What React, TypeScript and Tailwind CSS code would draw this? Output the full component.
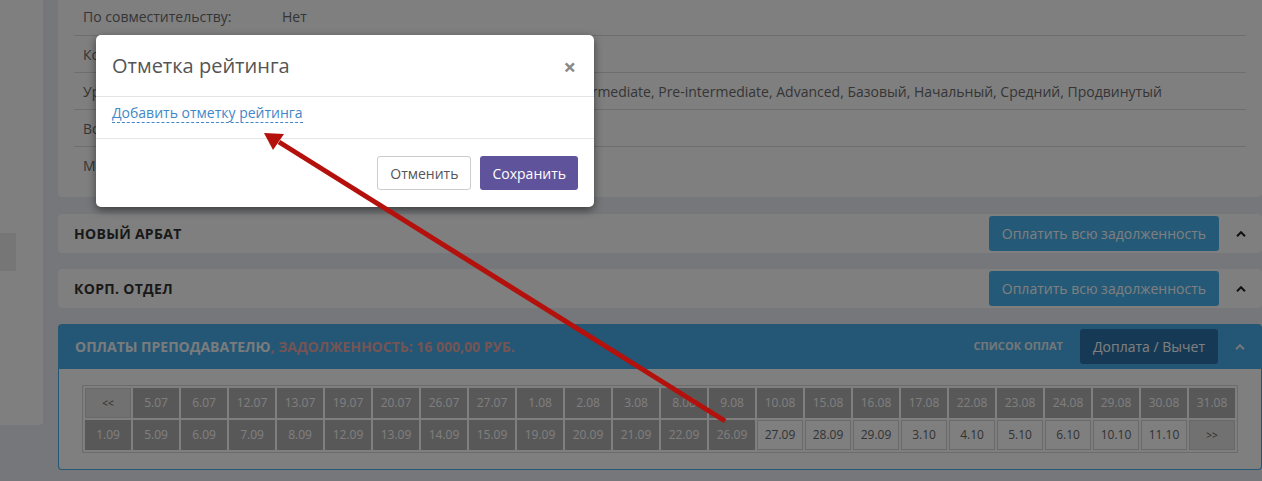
import React from 'react'

const row1 = ['<<', '5.07', '6.07', '12.07', '13.07', '19.07', '20.07', '26.07', '27.07', '1.08', '2.08', '3.08', '8.08', '9.08', '10.08', '15.08', '16.08', '17.08', '22.08', '23.08', '24.08', '29.08', '30.08', '31.08']
const row2 = ['1.09', '5.09', '6.09', '7.09', '8.09', '12.09', '13.09', '14.09', '15.09', '19.09', '20.09', '21.09', '22.09', '26.09', '27.09', '28.09', '29.09', '3.10', '4.10', '5.10', '6.10', '10.10', '11.10', '>>']

const infoRows = [
  { label: 'По совместительству:', value: 'Нет' },
  { label: 'Количество часов:', value: '' },
  { label: 'Уровни:', value: 'Beginner, Elementary, Upper-intermediate, Intermediate, Pre-intermediate, Advanced, Базовый, Начальный, Средний, Продвинутый' },
  { label: 'Возраст:', value: '' },
  { label: 'Метро:', value: '' },
]

const Chevron = ({ light }: { light?: boolean }) => (
  <svg width="10" height="6" viewBox="0 0 10 6" className={light ? 'text-[#e6edf3]' : 'text-[#222]'}>
    <polyline points="1,5.2 5,1.2 9,5.2" fill="none" stroke="currentColor" strokeWidth="2" />
  </svg>
)

// один серый/белый квадратик с датой
const DateCell = ({ text, idx }: { text: string; idx: number }) => {
  const nav = text === '<<' || text === '>>'
  const done = !nav && idx < 24 + 14
  let cls = 'bg-white border border-[#d4d4d4] text-[#666] text-[12px]'
  if (nav) cls = 'bg-[#e2e2e2] border border-[#d2d2d2] text-[#555] text-[10px]'
  else if (done) cls = 'bg-[#b0b0b0] border border-[#b0b0b0] text-white text-[12px]'
  return (
    <div className={`h-[30px] flex items-center justify-center ${cls}`}>
      {text}
    </div>
  )
}

const SectionCard = ({ title }: { title: string }) => (
  <div className="h-[39px] bg-white rounded-[4px] flex items-center justify-between pl-[16px]">
    <span className="text-[14px] font-bold text-[#333] uppercase tracking-[0.3px]">{title}</span>
    <div className="flex items-center">
      <button className="h-[35px] px-[13px] rounded-[3px] bg-[#49b2ee] text-white text-[14px]">
        Оплатить всю задолженность
      </button>
      <div className="w-[43px] flex justify-center">
        <Chevron />
      </div>
    </div>
  </div>
)

export default function App() {
  return (
    <div className="relative w-full h-[481px] overflow-hidden bg-[#eceef5] font-['Open_Sans',sans-serif]">
      <div className="flex">
        {/* sidebar */}
        <div className="w-[43px] h-[425px] bg-white rounded-br-[4px] pt-[233px] shrink-0">
          <div className="w-[16px] h-[38px] bg-[#ececec]" />
        </div>

        <div className="flex-1 ml-[15px]">
          {/* info card */}
          <div className="-mt-[2px] bg-white rounded-[4px] px-[16px] pb-[14px]">
            {infoRows.map((r, i) => (
              <div
                key={i}
                className={`h-[37px] flex items-center pl-[9px] text-[14px] text-[#6b6b6b] whitespace-nowrap ${i > 0 ? 'border-t border-[#dcdcdc]' : ''}`}
              >
                <span className="w-[199px] shrink-0">{r.label}</span>
                <span>{r.value}</span>
              </div>
            ))}
          </div>

          <div className="mt-[17px] flex flex-col gap-[16px]">
            <SectionCard title="Новый Арбат" />
            <SectionCard title="Корп. отдел" />

            {/* payments panel */}
            <div>
              <div className="h-[45px] bg-[#47aeea] rounded-t-[4px] flex items-center justify-between pl-[17px]">
                <span className="text-[14px] font-bold uppercase text-[#f3f7fb]">
                  Оплаты преподавателю<span className="text-[#e8a8a8]">, задолженность: 16 000,00 руб.</span>
                </span>
                <div className="flex items-center">
                  <span className="text-[11px] font-bold uppercase text-[#e8eef4] mr-[17px]">Список оплат</span>
                  <button className="h-[35px] px-[13px] rounded-[3px] bg-[#2c74ab] text-white text-[14px]">
                    Доплата / Вычет
                  </button>
                  <div className="w-[44px] flex justify-center">
                    <Chevron light />
                  </div>
                </div>
              </div>
              <div className="bg-white border border-t-0 border-[#47aeea] rounded-b-[4px] px-[23px] py-[16px]">
                <div className="grid grid-cols-[repeat(24,46px)] gap-[2px] p-[2px] border border-[#d8d8d8] w-[1156px]">
                  {[...row1, ...row2].map((t, i) => (
                    <DateCell key={i} text={t} idx={i} />
                  ))}
                </div>
              </div>
            </div>
          </div>
        </div>
      </div>

      {/* modal backdrop */}
      <div className="absolute inset-0 bg-black/50" />

      {/* modal */}
      <div className="absolute left-[96px] top-[35px] w-[498px] bg-white rounded-[5px] shadow-[0_3px_9px_rgba(0,0,0,0.5)]">
        <div className="h-[62px] px-[16px] flex items-center justify-between border-b border-[#e5e5e5]">
          <span className="text-[20px] text-[#555]">Отметка рейтинга</span>
          <span className="text-[22px] font-bold leading-none text-[#888] mr-[2px]">×</span>
        </div>
        <div className="h-[42px] px-[16px] pt-[3px] border-b border-[#e5e5e5]">
          <span className="inline-block text-[14px] leading-[19px] text-[#3f87c7] border-b border-dashed border-[#3f87c7]">
            Добавить отметку рейтинга
          </span>
        </div>
        <div className="flex justify-end gap-[9px] px-[16px] py-[17px]">
          <button className="h-[34px] px-[12px] rounded-[3px] border border-[#ccc] bg-white text-[14px] text-[#555]">
            Отменить
          </button>
          <button className="h-[34px] px-[12px] rounded-[3px] bg-[#5f539b] text-[14px] text-white">
            Сохранить
          </button>
        </div>
      </div>

      {/* red arrow */}
      <svg className="absolute left-0 top-0 pointer-events-none" width="1262" height="481" viewBox="0 0 1262 481">
        <line x1="725" y1="421" x2="279" y2="142" stroke="#b4100c" strokeWidth="5" />
        <polygon points="264,133 284,134 273,150" fill="#b4100c" />
      </svg>
    </div>
  )
}
